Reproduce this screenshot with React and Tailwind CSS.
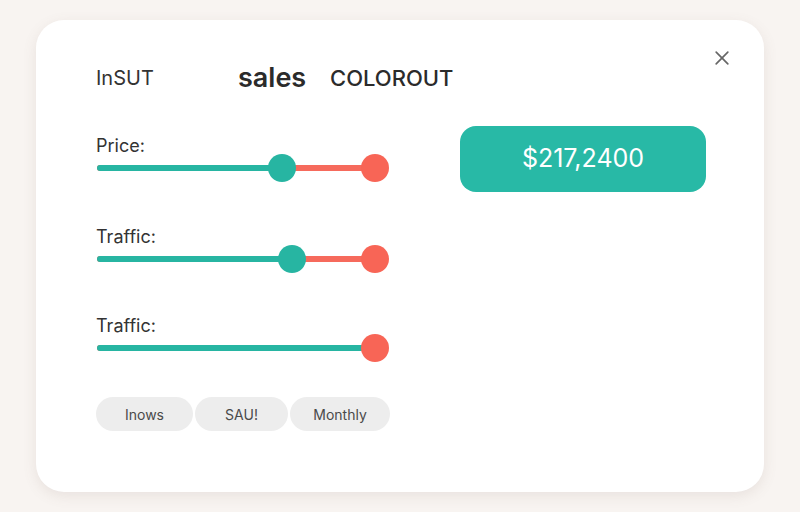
const SLIDERS = [
  { label: 'Price:', value: 282, mt: 'mt-[43px]' },
  { label: 'Traffic:', value: 292, mt: 'mt-[44px]' },
  { label: 'Traffic:', value: null, mt: 'mt-[42px]' },
]

const RANGES = ['Inows', 'SAU!', 'Monthly']

// track spans x=97..375 inside a 294px box; thumbs sit on the track
function RangeSlider({ value }) {
  const start = 1
  const end = 279
  const low = value == null ? null : value - 96
  return (
    <div className="relative -mt-[3px] h-[28px] w-[294px]">
      <div className="absolute top-[11px] left-[1px] h-[6px] w-[278px] rounded-full bg-[#f66a5c]" />
      <div
        className="absolute top-[11px] left-[1px] h-[6px] rounded-full bg-[#27b5a2]"
        style={{ width: (low ?? end) - start }}
      />
      {low != null && (
        <div
          className="absolute top-0 h-[28px] w-[28px] -translate-x-1/2 rounded-full bg-[#27b5a2]"
          style={{ left: low }}
        />
      )}
      <div
        className="absolute top-0 h-[28px] w-[28px] -translate-x-1/2 rounded-full bg-[#f86556]"
        style={{ left: end }}
      />
    </div>
  )
}

export default function App() {
  return (
    <div className="h-[512px] w-[800px] bg-[#f8f4f1] pt-[20px] pl-[36px] font-['Inter',sans-serif]">
      <div className="relative h-[472px] w-[728px] rounded-[28px] bg-white shadow-[0_4px_14px_rgba(120,100,90,0.12)]">
        <button className="absolute top-[28px] right-[32px] text-[#666]">
          <svg width="20" height="20" viewBox="0 0 24 24" fill="none" stroke="currentColor" strokeWidth="2" strokeLinecap="round">
            <line x1="5" y1="5" x2="19" y2="19" />
            <line x1="19" y1="5" x2="5" y2="19" />
          </svg>
        </button>

        <div className="flex pl-[60px] pt-[42px]">
          <div className="w-[364px]">
            <div className="flex h-[30px] items-center pt-[2px]">
              <span className="w-[142px] text-[20px] text-[#333]">InSUT</span>
              <span className="w-[92px] text-[27px] font-semibold text-[#2b2b2b]">sales</span>
              <span className="text-[22px] font-medium text-[#2b2b2b]">COLOROUT</span>
            </div>

            {SLIDERS.map((s, i) => (
              <div key={i} className={s.mt}>
                <p className="h-[22px] text-[18px] leading-[22px] text-[#333]">{s.label}</p>
                <RangeSlider value={s.value} />
              </div>
            ))}

            <div className="mt-[35px] flex gap-[2px]">
              {RANGES.map((r, i) => (
                <span
                  key={r}
                  className={`flex h-[34px] items-center justify-center rounded-full bg-[#ededed] text-[14px] text-[#4a4a4a] ${
                    i === 0 ? 'w-[97px]' : i === 1 ? 'w-[93px]' : 'w-[100px]'
                  }`}
                >
                  {r}
                </span>
              ))}
            </div>
          </div>

          <div className="pt-[64px]">
            <div className="flex h-[66px] w-[246px] items-center justify-center rounded-[16px] bg-[#28b9a6] text-[25px] text-white">
              $217,2400
            </div>
          </div>
        </div>
      </div>
    </div>
  )
}
